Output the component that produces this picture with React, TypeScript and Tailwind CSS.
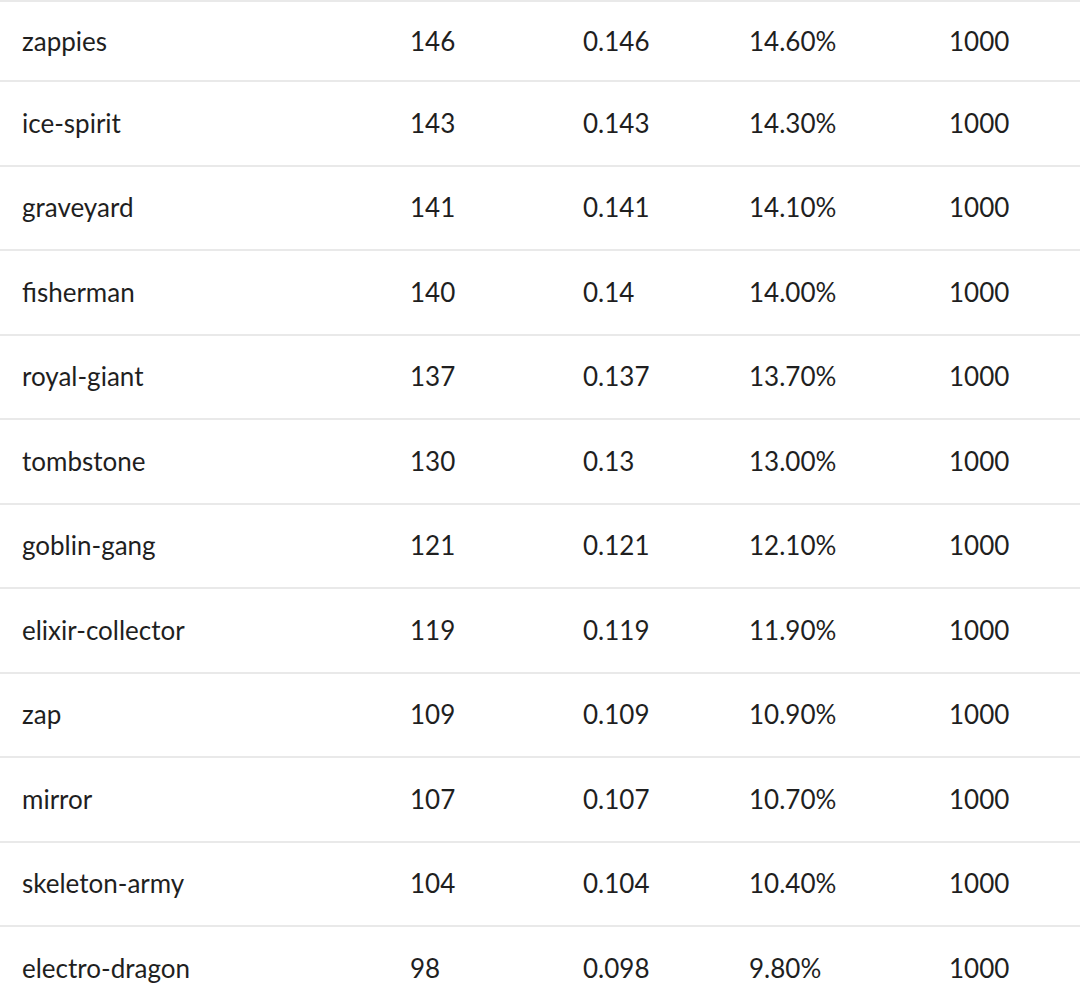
import React from 'react';

const rows: [string, string, string, string, string][] = [
  ['zappies', '146', '0.146', '14.60%', '1000'],
  ['ice-spirit', '143', '0.143', '14.30%', '1000'],
  ['graveyard', '141', '0.141', '14.10%', '1000'],
  ['fisherman', '140', '0.14', '14.00%', '1000'],
  ['royal-giant', '137', '0.137', '13.70%', '1000'],
  ['tombstone', '130', '0.13', '13.00%', '1000'],
  ['goblin-gang', '121', '0.121', '12.10%', '1000'],
  ['elixir-collector', '119', '0.119', '11.90%', '1000'],
  ['zap', '109', '0.109', '10.90%', '1000'],
  ['mirror', '107', '0.107', '10.70%', '1000'],
  ['skeleton-army', '104', '0.104', '10.40%', '1000'],
  ['electro-dragon', '98', '0.098', '9.80%', '1000'],
];

export default function App() {
  return (
    <div
      className="w-[1080px] h-[1008px] overflow-hidden bg-white text-[#1f1f1f] border-t-2 border-[#e9e9e9]"
      style={{ fontFamily: 'Lato, "Noto Sans", sans-serif' }}
    >
      {rows.map((r, i) => (
        <div
          key={r[0]}
          className={`grid grid-cols-[388px_173px_166px_200px_1fr] items-center pl-[22px] border-b-2 border-[#e9e9e9] text-[26px] ${
            i === 0 ? 'h-[80px]' : 'h-[84.5px]'
          }`}
        >
          <span>{r[0]}</span>
          <span>{r[1]}</span>
          <span>{r[2]}</span>
          <span>{r[3]}</span>
          <span>{r[4]}</span>
        </div>
      ))}
    </div>
  );
}
